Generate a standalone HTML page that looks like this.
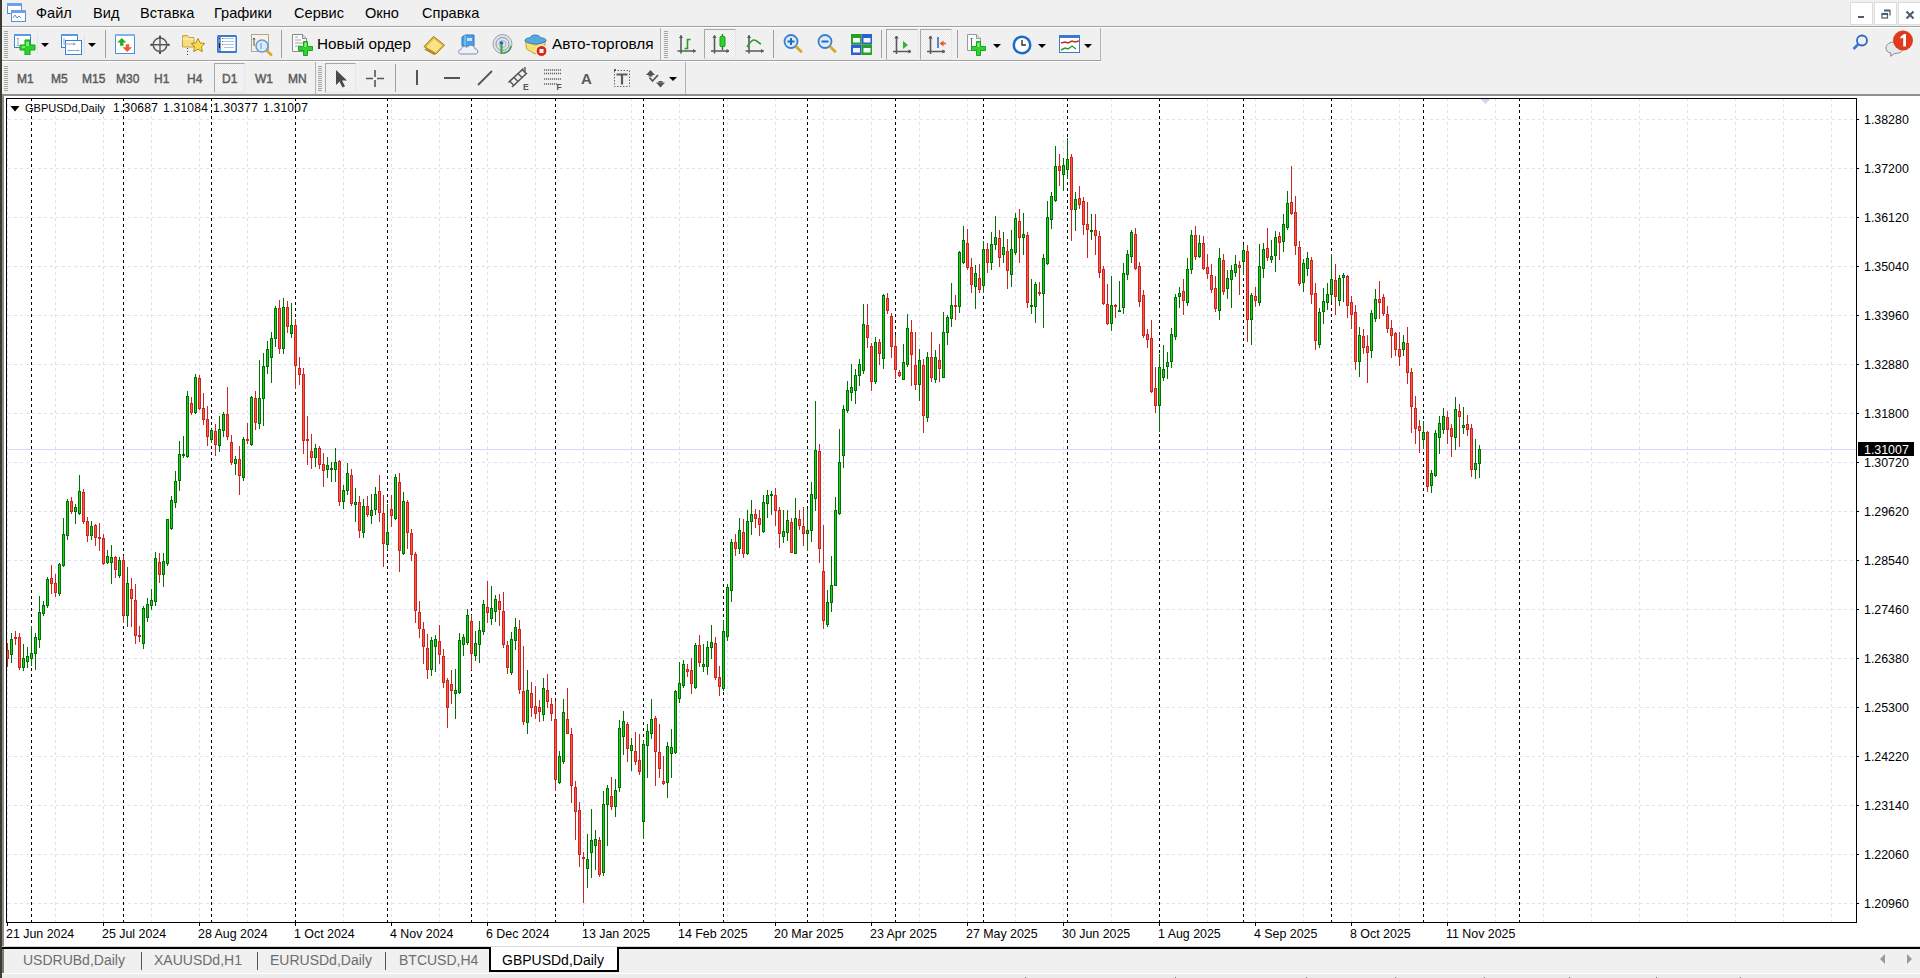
<!DOCTYPE html>
<html><head><meta charset="utf-8"><title>MetaTrader 5</title>
<style>
html,body{margin:0;padding:0;}
body{width:1920px;height:978px;overflow:hidden;position:relative;background:#f0f0f0;font-family:"Liberation Sans",sans-serif;color:#000;}
.a{position:absolute;}
.t{position:absolute;white-space:nowrap;line-height:1;}
.chart{position:absolute;left:0;top:0;}
.menu{font-size:14.6px;top:6px;}
.tf{font-size:12px;color:#5c5c5c;-webkit-text-stroke:0.45px #5c5c5c;top:73px;}
.px{font-size:12.4px;left:1864px;}
.hd{font-size:12px;top:102px;letter-spacing:0.25px;}
.dt{font-size:12.4px;top:928px;}
.tab{font-size:14px;top:953px;color:#6d6d6d;}
.grip{position:absolute;width:4px;background:repeating-linear-gradient(#a4a4a4 0 1px,transparent 1px 2px);}
.sep{position:absolute;width:1px;background:#a0a0a0;}
.pressed{position:absolute;border:1px solid;border-color:#a8a8a8 #e8e8e8 #e8e8e8 #a8a8a8;background-color:#f4f4f4;background-image:conic-gradient(#f7f7f7 25%,#ebebeb 0 50%,#f7f7f7 0 75%,#ebebeb 0);background-size:2px 2px;box-sizing:border-box;}
.dd{position:absolute;width:0;height:0;border-left:4px solid transparent;border-right:4px solid transparent;border-top:4px solid #000;}
</style></head><body>
<!-- left desktop strip & mdi border -->
<div class="a" style="left:0;top:0;width:2px;height:978px;background:#3c3c30"></div>
<!-- menu bar -->
<div class="a" style="left:2px;top:0;width:1918px;height:26px;background:#f0f0f0"></div>
<div class="a" style="left:2px;top:26px;width:1918px;height:1px;background:#a0a0a0"></div>
<div class="a" style="left:2px;top:27px;width:1918px;height:1px;background:#ffffff"></div>
<svg class="a" style="left:6px;top:2px" width="22" height="22" viewBox="0 0 22 22">
<rect x="1.5" y="1.5" width="14" height="10" fill="#fff" stroke="#5b8fd8"/><rect x="1" y="1" width="15" height="3" fill="#6fa0e8"/>
<rect x="5.5" y="8.5" width="14" height="11" fill="#fff" stroke="#5b8fd8"/><rect x="5" y="8" width="15" height="3" fill="#6fa0e8"/>
<path d="M7 16l2-3 2 3 2-2 2 2" stroke="#5b8fd8" fill="none"/>
</svg>
<span class="t menu" style="left:36px">Файл</span>
<span class="t menu" style="left:93px">Вид</span>
<span class="t menu" style="left:140px">Вставка</span>
<span class="t menu" style="left:214px">Графики</span>
<span class="t menu" style="left:294px">Сервис</span>
<span class="t menu" style="left:365px">Окно</span>
<span class="t menu" style="left:422px">Справка</span>
<!-- window buttons -->
<div class="a" style="left:1850px;top:2px;width:23px;height:23px;background:#fff;border:1px solid #dcdcdc;box-sizing:border-box"></div>
<div class="a" style="left:1874px;top:2px;width:23px;height:23px;background:#fff;border:1px solid #dcdcdc;box-sizing:border-box"></div>
<div class="a" style="left:1898px;top:2px;width:22px;height:23px;background:#fff;border:1px solid #dcdcdc;border-right:none;box-sizing:border-box"></div>
<div class="a" style="left:1858px;top:16px;width:6px;height:2px;background:#4a5a70"></div>
<svg class="a" style="left:1881px;top:9px" width="10" height="10"><rect x="1" y="4.5" width="5.5" height="4.5" fill="none" stroke="#4a5a70" stroke-width="1.2"/><path d="M1 5h5.5" stroke="#4a5a70" stroke-width="2"/><path d="M3 1.5h6v5" fill="none" stroke="#4a5a70" stroke-width="1.2"/><path d="M3 1.5h6" stroke="#4a5a70" stroke-width="2"/></svg>
<svg class="a" style="left:1905px;top:10px" width="10" height="10"><path d="M1.5 1.5l7 7M8.5 1.5l-7 7" stroke="#4a5a70" stroke-width="2"/></svg>

<!-- toolbar row 1 -->
<div class="a" style="left:2px;top:60px;width:1099px;height:1px;background:#a0a0a0"></div>
<div class="a" style="left:2px;top:61px;width:1099px;height:1px;background:#ffffff"></div>
<div class="a" style="left:1100px;top:28px;width:1px;height:32px;background:#b4b4b4"></div>
<div class="grip" style="left:4px;top:31px;height:27px"></div>
<div class="grip" style="left:664px;top:31px;height:27px"></div>
<div class="sep" style="left:105px;top:30px;height:28px"></div>
<div class="sep" style="left:281px;top:30px;height:28px"></div>
<div class="sep" style="left:660px;top:28px;height:32px;background:#b4b4b4"></div>
<div class="sep" style="left:773px;top:30px;height:28px"></div>
<div class="sep" style="left:881px;top:30px;height:28px"></div>
<div class="sep" style="left:957px;top:30px;height:28px"></div>
<!-- icons row1 -->
<!-- new chart -->
<svg class="a" style="left:13px;top:33px" width="24" height="22" viewBox="0 0 24 22">
<rect x="1.5" y="1.5" width="16" height="13" fill="#fff" stroke="#3d80cc"/><rect x="1" y="1" width="17" height="2" fill="#5a9ae0"/>
<path d="M5 5v8M4 6l1-1 1 1M4 12l1 1 1-1" stroke="#8aa8d0" fill="none"/>
<path d="M12 7h5v5h5v5h-5v5h-5v-5H7v-5h5z" fill="#2ad42a" stroke="#12a012"/>
<path d="M13 9h3v4h-3zM9 13h3v2H9z" fill="#7aee7a"/>
</svg>
<div class="a" style="left:37px;top:34px;width:1px;height:20px;background:#dde4ee"></div>
<div class="dd" style="left:41px;top:43px"></div>
<!-- profiles -->
<svg class="a" style="left:60px;top:33px" width="24" height="24" viewBox="0 0 24 24">
<rect x="1.5" y="1.5" width="16" height="13" fill="#fff" stroke="#3d80cc"/><rect x="1" y="1" width="17" height="2" fill="#5a9ae0"/>
<rect x="5.5" y="7.5" width="16" height="14" fill="#fff" stroke="#3d80cc"/>
<path d="M3.5 11h12M13 10l2 1-2 1M4 5v6" stroke="#8aa8d0" fill="none"/>
<path d="M8 17.5h11M9 16.5l-1 1 1 1M18 16.5l1 1-1 1" stroke="#8aa8d0" fill="none"/>
</svg>
<div class="a" style="left:84px;top:34px;width:1px;height:20px;background:#dde4ee"></div>
<div class="dd" style="left:88px;top:43px"></div>
<!-- market watch -->
<svg class="a" style="left:114px;top:33px" width="22" height="22" viewBox="0 0 22 22">
<rect x="1.5" y="1.5" width="19" height="19" fill="#fff" stroke="#4a90e0"/><rect x="1" y="1" width="20" height="2" fill="#7ab4f4"/>
<path d="M7.8 5L3.3 9.5h2.8v3.2h3.4V9.5h2.8z" fill="#22b022"/><path d="M13.2 19l4.8-4.8h-2.8v-3h-3.4v3H8.5z" fill="#f05a28"/>
</svg>
<!-- crosshair -->
<svg class="a" style="left:149px;top:35px" width="22" height="20" viewBox="0 0 22 20">
<circle cx="11" cy="9.75" r="6.8" fill="none" stroke="#5a5a5a" stroke-width="1.5"/><path d="M11 0.5v18.5M1.5 9.75h19" stroke="#5a5a5a" stroke-width="1.4"/>
<path d="M10 1h2v2h-2zM10 17h2v2h-2zM1.5 8.75h2v2h-2zM18.5 8.75h2v2h-2z" fill="#4a4a4a"/>
</svg>
<!-- folder star -->
<svg class="a" style="left:181px;top:33px" width="26" height="23" viewBox="0 0 26 23">
<path d="M1.5 2.5h5l1.5 2h5v9.5h-11.5z" fill="#f4dc80" stroke="#c8a040"/><path d="M1.5 6h11.5" stroke="#fff4c0"/>
<path d="M6.5 15v1M6.5 18v1M6.5 21v1" stroke="#333"/>
<path d="M17 5.5l2.1 4.4 4.7.6-3.4 3.3.9 4.8-4.3-2.4-4.3 2.4.9-4.8-3.4-3.3 4.7-.6z" fill="#f8dc48" stroke="#b08818"/>
</svg>
<!-- window list -->
<svg class="a" style="left:216px;top:34px" width="22" height="20" viewBox="0 0 22 20">
<rect x="1" y="1" width="20" height="18" rx="1.5" fill="#3a7ad0"/><rect x="5" y="3" width="14.5" height="14" fill="#fff"/><rect x="2.5" y="3" width="2.5" height="14" fill="#6a9ad8"/>
<path d="M8 4.5h10M8 7.5h10M8 10.5h10M8 13.5h10" stroke="#aac4ec"/><path d="M6 4.5h1.5M6 10.5h1.5" stroke="#f04060"/><path d="M6 7.5h1.5" stroke="#30a050"/><path d="M3 4h1v1H3zM3 9h1v5H3z" fill="#222"/>
</svg>
<!-- tester -->
<svg class="a" style="left:250px;top:33px" width="24" height="24" viewBox="0 0 24 24">
<rect x="1.5" y="1.5" width="17" height="17" fill="#f6f2ea" stroke="#b0a88e"/>
<path d="M4 13V5M4 5l-1 1.5M4 5l1 1.5" stroke="#555" fill="none"/>
<circle cx="12" cy="13" r="6" fill="#dceafa" stroke="#6a9ad4" stroke-width="1.6"/><path d="M11 10v6" stroke="#8ab0dc" stroke-width="1.5"/>
<path d="M16.5 17.5l5.5 5" stroke="#d8a828" stroke-width="2.6"/>
</svg>
<!-- new order -->
<svg class="a" style="left:290px;top:33px" width="26" height="25" viewBox="0 0 26 25">
<path d="M2.5 1.5h10l4 4v13h-14z" fill="#fafafa" stroke="#8a8a8a"/><path d="M12.5 1.5v4h4" fill="#ddd" stroke="#8a8a8a"/><path d="M5 4h3M5 7h6M5 10h8M5 13h6" stroke="#a8a8a8" stroke-width="1.2"/>
<path d="M13.5 8.5h4v5h5v4h-5v5h-4v-5h-5v-4h5z" fill="#30d030" stroke="#18a818"/><path d="M14.5 10h2v4h-2z" fill="#90f090"/>
</svg>
<span class="t" style="left:317px;top:36px;font-size:15.3px">Новый ордер</span>
<!-- book -->
<svg class="a" style="left:422px;top:34px" width="26" height="22" viewBox="0 0 26 22">
<path d="M2 12.5L11.5 2.5l11 8.5-8.5 9z" fill="#e8bc3c" stroke="#a87818"/><path d="M4.5 13L12 5l8 6.5-6.5 6.8z" fill="#f8e488"/><path d="M3 15l10 5.5" stroke="#b08020" stroke-width="1.5"/>
</svg>
<!-- vps cloud -->
<svg class="a" style="left:457px;top:33px" width="24" height="24" viewBox="0 0 24 24">
<path d="M5 4l3-2h9v11H5z" fill="#4aa0e8" stroke="#2a74c0"/><path d="M8 2v11" stroke="#9cd0f8"/><rect x="10" y="5" width="5" height="3" fill="#c8e4fa"/>
<path d="M3.5 21c-2.5 0-2.5-4.5.5-4.5.3-3 4-4 6-2 2-3.5 8-2.5 8 1.5 3.5-.5 4 5 .5 5z" fill="#eef2f8" stroke="#7a8ea8"/>
</svg>
<!-- signals -->
<svg class="a" style="left:491px;top:33px" width="23" height="23" viewBox="0 0 23 23">
<circle cx="11.5" cy="11" r="9.5" fill="#dde3e8" stroke="#98a4b0"/><circle cx="11.5" cy="11" r="6.5" fill="none" stroke="#8c98a4"/><circle cx="11.5" cy="11" r="3.5" fill="none" stroke="#a8b4c0"/><circle cx="10.5" cy="10" r="1.8" fill="#2a5ad0"/>
<path d="M10.5 11v10" stroke="#30a830" stroke-width="2"/><path d="M12 20a9 9 0 0 0 8-7" stroke="#4a9a5a" stroke-width="1.6" fill="none"/>
</svg>
<!-- auto trading -->
<svg class="a" style="left:524px;top:33px" width="25" height="25" viewBox="0 0 25 25">
<path d="M2.5 16l-1-8 10 4 10-4-1.5 9-9 4z" fill="#f8e070" stroke="#c8a030"/>
<path d="M1 8c0-3 3-3 5-3 1-4 9-4 11 0 2 0 5 0 5 3-2 2-7 3-10.5 3S3 10 1 8z" fill="#58a8e0" stroke="#3080c0"/>
<circle cx="17.5" cy="18" r="5.5" fill="#d82818" stroke="#fff" stroke-width="1"/><rect x="15.5" y="16" width="4" height="4" fill="#fff"/>
</svg>
<span class="t" style="left:552px;top:36px;font-size:15.4px">Авто-торговля</span>
<!-- chart types -->
<div class="pressed" style="left:704px;top:29px;width:32px;height:30px"></div>
<svg class="a" style="left:676px;top:33px" width="22" height="22" viewBox="0 0 22 22">
<path d="M5 2.5v18M1.5 18h18" stroke="#5a5a5a" stroke-width="1.6" fill="none"/><path d="M3.5 5l1.5-2.5L6.5 5M17 16.5l2.5 1.5-2.5 1.5" fill="#5a5a5a" stroke="#5a5a5a"/>
<path d="M8.5 15.5h3v-9h3" stroke="#2a9a2a" stroke-width="1.6" fill="none"/>
</svg>
<svg class="a" style="left:710px;top:33px" width="22" height="22" viewBox="0 0 22 22">
<path d="M4.5 2.5v18M1 18h18" stroke="#5a5a5a" stroke-width="1.6" fill="none"/><path d="M3 5l1.5-2.5L6 5M16.5 16.5l2.5 1.5-2.5 1.5" fill="#5a5a5a" stroke="#5a5a5a"/>
<path d="M12.5 1v16" stroke="#108a10" stroke-width="1.4"/><rect x="10" y="3.5" width="5" height="10" rx="1" fill="#30d030" stroke="#12a012"/>
</svg>
<svg class="a" style="left:744px;top:33px" width="22" height="22" viewBox="0 0 22 22">
<path d="M5 2.5v18M1.5 18h18" stroke="#5a5a5a" stroke-width="1.6" fill="none"/><path d="M3.5 5l1.5-2.5L6.5 5M17 16.5l2.5 1.5-2.5 1.5" fill="#5a5a5a" stroke="#5a5a5a"/>
<path d="M3 14c2-3 4-7 7-7s4 3 7 4" stroke="#2a9a2a" stroke-width="1.6" fill="none"/>
</svg>
<!-- zoom in/out, tile -->
<svg class="a" style="left:782px;top:33px" width="22" height="22" viewBox="0 0 22 22">
<circle cx="9" cy="8.5" r="6.5" fill="#dcecfc" stroke="#3a80d0" stroke-width="1.8"/><path d="M5.5 8.5h7M9 5v7" stroke="#2a68c0" stroke-width="2"/><path d="M13.8 13.3l6 6" stroke="#d8a828" stroke-width="2.8"/>
</svg>
<svg class="a" style="left:816px;top:33px" width="22" height="22" viewBox="0 0 22 22">
<circle cx="9" cy="8.5" r="6.5" fill="#dcecfc" stroke="#3a80d0" stroke-width="1.8"/><path d="M5.5 8.5h7" stroke="#2a68c0" stroke-width="2"/><path d="M13.8 13.3l6 6" stroke="#d8a828" stroke-width="2.8"/>
</svg>
<svg class="a" style="left:851px;top:34px" width="21" height="21" viewBox="0 0 21 21">
<rect x="0" y="0" width="10.5" height="10.5" fill="#28a028"/><rect x="10.5" y="0" width="10.5" height="10.5" fill="#2860d0"/><rect x="0" y="10.5" width="10.5" height="10.5" fill="#2860d0"/><rect x="10.5" y="10.5" width="10.5" height="10.5" fill="#28a028"/>
<rect x="2" y="4" width="7" height="4.5" fill="#f0fff0"/><rect x="12.5" y="4" width="7" height="4.5" fill="#f0f4ff"/><rect x="2" y="14" width="7" height="4.5" fill="#f0f4ff"/><rect x="12.5" y="14" width="7" height="4.5" fill="#f0fff0"/>
</svg>
<!-- autoscroll, shift -->
<div class="pressed" style="left:886px;top:29px;width:32px;height:31px"></div>
<div class="pressed" style="left:920px;top:29px;width:32px;height:31px"></div>
<svg class="a" style="left:888px;top:33px" width="26" height="24" viewBox="0 0 26 24">
<path d="M8.5 3v18M5 18.5h18" stroke="#5a5a5a" stroke-width="1.6" fill="none"/><path d="M7 5.5l1.5-2.5L10 5.5M20.5 17l2.5 1.5-2.5 1.5" fill="#5a5a5a" stroke="#5a5a5a"/>
<path d="M15 8v8l5-4z" fill="#2ab82a"/>
</svg>
<svg class="a" style="left:922px;top:33px" width="26" height="24" viewBox="0 0 26 24">
<path d="M8.5 3v18M5 18.5h18" stroke="#5a5a5a" stroke-width="1.6" fill="none"/><path d="M7 5.5l1.5-2.5L10 5.5M20.5 17l2.5 1.5-2.5 1.5" fill="#5a5a5a" stroke="#5a5a5a"/>
<path d="M16 4v11" stroke="#2a70c0" stroke-width="1.6"/><path d="M17.5 10.5l4-3v6z" fill="#e85a20"/><path d="M19 10.5h5" stroke="#e85a20" stroke-width="1.6"/>
</svg>
<!-- indicators, periods, templates -->
<svg class="a" style="left:966px;top:33px" width="24" height="25" viewBox="0 0 24 25">
<path d="M1.5 1.5h9l4 4v12h-13z" fill="#fafafa" stroke="#9a9a9a"/><path d="M10.5 1.5v4h4" fill="#e0e0e0" stroke="#9a9a9a"/><path d="M5.5 5v10M4.5 6l1-1 1 1" stroke="#666" fill="none"/>
<path d="M10.5 8.5h4v5h5v4h-5v5h-4v-5h-5v-4h5z" fill="#30d030" stroke="#18a818"/><path d="M11.5 10h2v4h-2z" fill="#90f090"/>
</svg>
<div class="dd" style="left:993px;top:44px"></div>
<svg class="a" style="left:1011px;top:34px" width="22" height="22" viewBox="0 0 22 22">
<circle cx="11" cy="11" r="9.5" fill="#1a6ad0"/><circle cx="11" cy="11" r="7" fill="#fff"/><path d="M11 6v5h4" stroke="#333" stroke-width="1.4" fill="none"/>
</svg>
<div class="dd" style="left:1038px;top:44px"></div>
<svg class="a" style="left:1058px;top:34px" width="24" height="20" viewBox="0 0 24 20">
<rect x="1.5" y="1.5" width="20" height="17" fill="#fff" stroke="#3a7ad0"/><rect x="1" y="1" width="21" height="3" fill="#3a7ad0"/>
<path d="M3 9l4-1 3 1 4-2 3 1 4-1" stroke="#c03020" stroke-width="1.4" fill="none"/><path d="M3 16l4-2 3 1 4-3 4 3" stroke="#2a9a2a" stroke-width="1.4" fill="none"/>
</svg>
<div class="dd" style="left:1084px;top:44px"></div>
<!-- search & chat -->
<svg class="a" style="left:1851px;top:34px" width="20" height="18" viewBox="0 0 20 18">
<circle cx="11" cy="6.5" r="5" fill="none" stroke="#2a68c8" stroke-width="1.8"/><path d="M7.5 10l-5 5" stroke="#3a78d8" stroke-width="2.6"/>
</svg>
<svg class="a" style="left:1883px;top:29px" width="32" height="28" viewBox="0 0 32 28">
<path d="M3 19c0-4 4-6 8.5-6s8.5 2 8.5 6-4 5.5-8.5 5.5l-4 2.8 .6-3.2C4.5 23.5 3 21.5 3 19z" fill="#e6e8ea" stroke="#8a8a8a"/>
<circle cx="20" cy="11.5" r="10" fill="#e03a1e"/><path d="M17.5 7.8L21 5h2v12.5h-2.8V8.6l-2.7 1.3z" fill="#fff"/>
</svg>

<!-- toolbar row 2 -->
<div class="a" style="left:2px;top:94px;width:1918px;height:2px;background:#8e8e8e"></div>
<div class="grip" style="left:4px;top:66px;height:25px"></div>
<div class="grip" style="left:318px;top:66px;height:25px"></div>
<div class="sep" style="left:315px;top:62px;height:32px;background:#b4b4b4"></div>
<div class="sep" style="left:685px;top:62px;height:32px;background:#b4b4b4"></div>
<div class="sep" style="left:395px;top:64px;height:28px"></div>
<div class="pressed" style="left:214px;top:63px;width:31px;height:30px"></div>
<div class="pressed" style="left:325px;top:63px;width:31px;height:30px"></div>
<span class="t tf" style="left:17px">M1</span>
<span class="t tf" style="left:51px">M5</span>
<span class="t tf" style="left:82px">M15</span>
<span class="t tf" style="left:116px">M30</span>
<span class="t tf" style="left:154px">H1</span>
<span class="t tf" style="left:187px">H4</span>
<span class="t tf" style="left:222px">D1</span>
<span class="t tf" style="left:255px">W1</span>
<span class="t tf" style="left:288px">MN</span>
<svg class="a" style="left:331px;top:68px" width="20" height="22" viewBox="0 0 20 22">
<path d="M5 2v15l3.5-3.5 3 6 2.5-1.2-3-5.8H16z" fill="#4a4a4a"/>
</svg>
<svg class="a" style="left:365px;top:68px" width="20" height="22" viewBox="0 0 20 22">
<path d="M10 2v7M10 12v7M1 10.5h7M12 10.5h7" stroke="#555" stroke-width="1.6"/>
</svg>
<div class="a" style="left:416px;top:70px;width:2px;height:15px;background:#555"></div>
<div class="a" style="left:444px;top:77px;width:16px;height:2px;background:#555"></div>
<svg class="a" style="left:476px;top:69px" width="18" height="18" viewBox="0 0 18 18"><path d="M2 16L16 2" stroke="#555" stroke-width="1.8"/></svg>
<svg class="a" style="left:507px;top:66px" width="24" height="25" viewBox="0 0 24 25">
<path d="M1.5 16.5L16.5 2.5M5 21L20 7" stroke="#555" stroke-width="1.6"/>
<path d="M3 15.5l4 4M7 11.5l4 4M11 7.5l4 4M15 3.5l4 4" stroke="#555" stroke-width="1.4"/><path d="M18 1v5" stroke="#555" stroke-width="1.4"/>
<text x="16" y="23.5" font-size="8.5" font-weight="bold" fill="#555" font-family="Liberation Sans">E</text>
</svg>
<svg class="a" style="left:542px;top:66px" width="24" height="25" viewBox="0 0 24 25">
<path d="M2 4h17M2 7.5h17M2 13h17M2 18h14" stroke="#666" stroke-width="1.4" stroke-dasharray="1.2 0.8"/>
<text x="14.5" y="23.5" font-size="8.5" font-weight="bold" fill="#555" font-family="Liberation Sans">F</text>
</svg>
<span class="t" style="left:581px;top:71px;font-size:15px;font-weight:bold;color:#5a5a5a">A</span>
<svg class="a" style="left:612px;top:68px" width="20" height="21" viewBox="0 0 20 21">
<rect x="2.5" y="2.5" width="15" height="16" fill="none" stroke="#666" stroke-dasharray="1.5 1.5"/><path d="M4.5 6.5h11M10 6.5v10" stroke="#5a5a5a" stroke-width="2.2"/><path d="M2 1h2v2H2z" fill="#555"/>
</svg>
<svg class="a" style="left:645px;top:68px" width="22" height="22" viewBox="0 0 22 22">
<path d="M5.5 2L10 7H1z" fill="#555"/><path d="M4.5 9.5l3 3.5 5.5-6" stroke="#555" stroke-width="1.8" fill="none"/><path d="M15.5 19.5L20 14.5h-9z" fill="#555"/><path d="M3.5 7h4v1.5h-4zM13.5 13h4v1.5h-4z" fill="#555"/>
</svg>
<div class="dd" style="left:669px;top:77px"></div>

<!-- chart window -->
<div class="a" style="left:2px;top:95px;width:2px;height:879px;background:#8c8c8c"></div>
<div class="a" style="left:4px;top:96px;width:1916px;height:850px;background:#fff"></div>
<svg class="chart" width="1920" height="978" viewBox="0 0 1920 978" shape-rendering="crispEdges"><path d="M8 119.5H1856M8 168.5H1856M8 217.5H1856M8 266.5H1856M8 315.5H1856M8 364.5H1856M8 413.5H1856M8 462.5H1856M8 511.5H1856M8 560.5H1856M8 609.5H1856M8 658.5H1856M8 707.5H1856M8 756.5H1856M8 805.5H1856M8 854.5H1856M8 903.5H1856" stroke="#e0e0ee" stroke-width="1" stroke-dasharray="3 3" fill="none"/><path d="M7.5 98V922M55.5 98V922M103.5 98V922M151.5 98V922M199.5 98V922M247.5 98V922M295.5 98V922M343.5 98V922M391.5 98V922M439.5 98V922M487.5 98V922M535.5 98V922M583.5 98V922M631.5 98V922M679.5 98V922M727.5 98V922M775.5 98V922M823.5 98V922M871.5 98V922M919.5 98V922M967.5 98V922M1015.5 98V922M1063.5 98V922M1111.5 98V922M1159.5 98V922M1207.5 98V922M1255.5 98V922M1303.5 98V922M1351.5 98V922M1399.5 98V922M1447.5 98V922M1495.5 98V922M1543.5 98V922M1591.5 98V922M1639.5 98V922M1687.5 98V922M1735.5 98V922M1783.5 98V922M1831.5 98V922" stroke="#e0e0ee" stroke-width="1" stroke-dasharray="3 3" fill="none"/><rect x="7" y="449" width="1849" height="1" fill="#d6d6f6"/><path d="M31.5 98V922M123.5 98V922M211.5 98V922M295.5 98V922M387.5 98V922M471.5 98V922M555.5 98V922M643.5 98V922M723.5 98V922M807.5 98V922M895.5 98V922M983.5 98V922M1067.5 98V922M1159.5 98V922M1243.5 98V922M1331.5 98V922M1423.5 98V922M1519.5 98V922" stroke="#000" stroke-width="1" stroke-dasharray="3 3" fill="none"/><path d="M1480 99H1490L1485 104Z" fill="#d4d4f4"/><path d="M11.5 633V663M23.5 644V671M27.5 647V668M31.5 626V666M35.5 633V670M39.5 596V648M43.5 601V616M47.5 577V608M59.5 563V596M63.5 518V567M67.5 499V540M75.5 504V524M79.5 475V515M91.5 521V540M107.5 550V564M111.5 545V584M119.5 557V578M127.5 567V627M143.5 606V649M147.5 598V622M151.5 589V610M155.5 552V606M163.5 553V587M167.5 519V566M171.5 496V530M175.5 471V508M179.5 441V491M183.5 436V458M187.5 391V458M195.5 374V414M211.5 429V443M219.5 416V452M223.5 412V437M235.5 456V475M243.5 437V481M251.5 396V446M259.5 360V429M263.5 353V426M267.5 341V374M271.5 332V383M275.5 306V347M283.5 298V354M291.5 303V338M315.5 444V467M327.5 457V478M331.5 462V482M335.5 448V482M343.5 485V509M347.5 463V495M355.5 488V522M363.5 499V538M371.5 494V524M375.5 487V515M387.5 504V550M395.5 474V520M403.5 492V555M431.5 637V676M435.5 635V672M455.5 669V719M459.5 633V694M463.5 634V656M467.5 609V645M475.5 631V661M479.5 621V663M483.5 600V635M491.5 586V625M495.5 595V622M511.5 632V675M515.5 618V650M527.5 670V734M543.5 678V721M559.5 751V784M563.5 699V764M587.5 834V888M591.5 809V878M595.5 830V870M603.5 791V876M607.5 785V846M615.5 779V817M619.5 720V792M623.5 711V755M631.5 738V771M643.5 740V839M647.5 724V778M651.5 699V739M667.5 742V798M671.5 729V778M675.5 690V754M679.5 662V703M683.5 660V688M695.5 643V689M703.5 644V672M707.5 641V675M711.5 625V659M723.5 620V691M727.5 584V641M731.5 539V602M739.5 518V554M747.5 510V555M751.5 500V535M763.5 495V533M767.5 490V518M771.5 491V515M783.5 510V543M787.5 510V541M795.5 498V554M807.5 509V551M811.5 482V542M815.5 401V511M827.5 590V627M831.5 556V612M835.5 497V586M839.5 429V515M843.5 405V468M847.5 381V413M851.5 364V401M855.5 369V404M859.5 359V386M863.5 304V374M875.5 337V384M883.5 294V369M903.5 344V380M907.5 314V367M919.5 349V401M927.5 352V422M935.5 350V383M943.5 312V378M947.5 315V345M951.5 283V327M959.5 251V313M963.5 226V264M975.5 265V309M983.5 241V293M991.5 232V270M995.5 216V250M1003.5 232V263M1011.5 230V287M1015.5 213V255M1023.5 213V255M1031.5 279V314M1035.5 282V323M1043.5 254V328M1047.5 201V265M1051.5 192V229M1055.5 146V202M1063.5 158V191M1067.5 138V179M1075.5 192V231M1091.5 214V240M1111.5 276V331M1119.5 281V312M1123.5 263V314M1127.5 250V280M1131.5 230V263M1159.5 354V432M1163.5 345V381M1167.5 352V379M1171.5 328V368M1175.5 294V340M1179.5 287V308M1187.5 258V306M1191.5 230V274M1199.5 235V258M1219.5 248V320M1227.5 270V299M1231.5 265V308M1235.5 255V277M1243.5 245V275M1251.5 293V345M1259.5 244V306M1263.5 243V278M1271.5 240V263M1275.5 231V272M1283.5 214V252M1287.5 191V230M1303.5 259V292M1307.5 252V276M1319.5 308V348M1323.5 288V324M1327.5 283V310M1331.5 254V302M1339.5 275V306M1343.5 273V302M1359.5 327V377M1371.5 310V358M1375.5 289V322M1403.5 335V356M1423.5 421V449M1431.5 470V493M1435.5 430V477M1439.5 416V454M1443.5 408V434M1455.5 397V450M1463.5 407V434M1475.5 439V479M1479.5 445V478" stroke="#007000" stroke-width="1" fill="none"/><path d="M7.5 643V667M15.5 631V645M19.5 633V670M51.5 565V594M55.5 574V597M71.5 497V514M83.5 489V524M87.5 517V542M95.5 524V546M99.5 523V551M103.5 534V565M115.5 556V578M123.5 556V623M131.5 578V627M135.5 584V644M139.5 626V642M159.5 553V583M191.5 397V415M199.5 375V410M203.5 393V425M207.5 406V446M215.5 424V456M227.5 387V440M231.5 435V465M239.5 446V495M247.5 423V444M255.5 391V430M279.5 300V354M287.5 301V333M295.5 319V389M299.5 357V385M303.5 368V454M307.5 416V465M311.5 434V469M319.5 446V469M323.5 453V487M339.5 460V506M351.5 469V506M359.5 496V538M367.5 496V517M379.5 475V522M383.5 495V567M391.5 495V527M399.5 473V572M407.5 500V549M411.5 529V561M415.5 552V623M419.5 601V638M423.5 622V664M427.5 634V679M439.5 625V664M443.5 649V688M447.5 678V728M451.5 670V704M471.5 615V670M487.5 581V623M499.5 594V626M503.5 592V648M507.5 641V674M519.5 620V694M523.5 646V725M531.5 682V717M535.5 686V719M539.5 700V722M547.5 674V708M551.5 698V721M555.5 701V791M567.5 688V734M571.5 728V803M575.5 781V840M579.5 802V867M583.5 852V903M599.5 837V877M611.5 777V810M627.5 722V762M635.5 732V765M639.5 734V775M655.5 716V786M659.5 724V778M663.5 756V785M687.5 664V677M691.5 658V694M699.5 635V667M715.5 637V680M719.5 666V696M735.5 534V556M743.5 519V558M755.5 509V528M759.5 510V536M775.5 488V526M779.5 507V548M791.5 518V553M799.5 510V530M803.5 507V546M819.5 444V563M823.5 525V629M867.5 304V348M871.5 343V391M879.5 339V365M887.5 293V314M891.5 313V358M895.5 335V379M899.5 370V377M911.5 320V386M915.5 332V390M923.5 359V433M931.5 332V382M939.5 344V382M955.5 295V320M967.5 229V270M971.5 258V293M979.5 264V293M987.5 243V273M999.5 230V267M1007.5 239V289M1019.5 209V263M1027.5 232V308M1039.5 282V296M1059.5 154V186M1071.5 154V241M1079.5 186V209M1083.5 197V235M1087.5 202V258M1095.5 214V255M1099.5 231V278M1103.5 266V305M1107.5 284V325M1115.5 304V318M1135.5 228V270M1139.5 262V307M1143.5 290V338M1147.5 329V348M1151.5 320V393M1155.5 367V413M1183.5 279V315M1195.5 226V260M1203.5 236V270M1207.5 254V279M1211.5 264V293M1215.5 276V312M1223.5 254V295M1239.5 261V295M1247.5 245V342M1255.5 287V307M1267.5 228V261M1279.5 232V260M1291.5 166V215M1295.5 196V255M1299.5 241V286M1311.5 257V304M1315.5 283V350M1335.5 264V315M1347.5 275V318M1351.5 296V329M1355.5 305V370M1363.5 329V354M1367.5 335V383M1379.5 281V319M1383.5 294V316M1387.5 306V333M1391.5 320V358M1395.5 332V356M1399.5 332V366M1407.5 327V384M1411.5 368V433M1415.5 396V444M1419.5 420V453M1427.5 431V492M1447.5 411V444M1451.5 424V457M1459.5 404V447M1467.5 415V436M1471.5 424V477" stroke="#cc2424" stroke-width="1" fill="none"/><path d="M10 639h3v16h-3ZM22 658h3v10h-3ZM26 656h3v6h-3ZM30 653h3v6h-3ZM34 637h3v17h-3ZM38 612h3v28h-3ZM42 605h3v9h-3ZM46 579h3v27h-3ZM58 564h3v30h-3ZM62 534h3v32h-3ZM66 501h3v35h-3ZM74 507h3v5h-3ZM78 491h3v23h-3ZM90 526h3v10h-3ZM106 556h3v7h-3ZM110 557h3v6h-3ZM118 560h3v16h-3ZM126 583h3v33h-3ZM142 608h3v36h-3ZM146 604h3v14h-3ZM150 600h3v6h-3ZM154 558h3v44h-3ZM162 561h3v14h-3ZM166 519h3v45h-3ZM170 500h3v29h-3ZM174 481h3v22h-3ZM178 454h3v27h-3ZM182 454h3v2h-3ZM186 396h3v61h-3ZM194 377h3v36h-3ZM210 430h3v10h-3ZM218 429h3v17h-3ZM222 414h3v17h-3ZM234 459h3v5h-3ZM242 439h3v39h-3ZM250 397h3v48h-3ZM258 398h3v26h-3ZM262 366h3v33h-3ZM266 349h3v18h-3ZM270 338h3v20h-3ZM274 308h3v31h-3ZM282 307h3v42h-3ZM290 325h3v9h-3ZM314 448h3v10h-3ZM326 465h3v5h-3ZM330 468h3v2h-3ZM334 462h3v8h-3ZM342 490h3v12h-3ZM346 473h3v18h-3ZM354 502h3v3h-3ZM362 506h3v27h-3ZM370 510h3v6h-3ZM374 494h3v16h-3ZM386 532h3v13h-3ZM394 477h3v42h-3ZM402 501h3v53h-3ZM430 640h3v30h-3ZM434 639h3v8h-3ZM454 690h3v4h-3ZM458 640h3v53h-3ZM462 637h3v8h-3ZM466 615h3v28h-3ZM474 643h3v13h-3ZM478 630h3v15h-3ZM482 604h3v28h-3ZM490 608h3v11h-3ZM494 599h3v13h-3ZM510 639h3v34h-3ZM514 627h3v14h-3ZM526 690h3v33h-3ZM542 688h3v27h-3ZM558 756h3v27h-3ZM562 712h3v50h-3ZM586 859h3v10h-3ZM590 840h3v13h-3ZM594 839h3v7h-3ZM602 804h3v69h-3ZM606 788h3v17h-3ZM614 790h3v17h-3ZM618 728h3v60h-3ZM622 721h3v16h-3ZM630 745h3v6h-3ZM642 744h3v78h-3ZM646 731h3v15h-3ZM650 719h3v15h-3ZM666 746h3v37h-3ZM670 747h3v7h-3ZM674 691h3v62h-3ZM678 683h3v16h-3ZM682 664h3v22h-3ZM694 645h3v43h-3ZM702 664h3v3h-3ZM706 647h3v20h-3ZM710 642h3v6h-3ZM722 631h3v58h-3ZM726 587h3v50h-3ZM730 542h3v49h-3ZM738 530h3v19h-3ZM746 521h3v33h-3ZM750 514h3v8h-3ZM762 502h3v30h-3ZM766 495h3v9h-3ZM770 494h3v2h-3ZM782 531h3v6h-3ZM786 520h3v13h-3ZM794 518h3v36h-3ZM806 530h3v4h-3ZM810 494h3v37h-3ZM814 450h3v49h-3ZM826 602h3v23h-3ZM830 585h3v18h-3ZM834 510h3v76h-3ZM838 462h3v52h-3ZM842 409h3v47h-3ZM846 390h3v21h-3ZM850 387h3v6h-3ZM854 375h3v16h-3ZM858 364h3v12h-3ZM862 324h3v47h-3ZM874 342h3v40h-3ZM882 295h3v64h-3ZM902 362h3v18h-3ZM906 328h3v37h-3ZM918 360h3v25h-3ZM926 357h3v61h-3ZM934 357h3v23h-3ZM942 332h3v46h-3ZM946 317h3v16h-3ZM950 305h3v14h-3ZM958 252h3v55h-3ZM962 240h3v23h-3ZM974 273h3v14h-3ZM982 249h3v37h-3ZM990 244h3v19h-3ZM994 237h3v8h-3ZM1002 247h3v8h-3ZM1010 249h3v26h-3ZM1014 218h3v35h-3ZM1022 234h3v4h-3ZM1030 305h3v2h-3ZM1034 284h3v23h-3ZM1042 258h3v36h-3ZM1046 217h3v47h-3ZM1050 196h3v24h-3ZM1054 166h3v35h-3ZM1062 165h3v10h-3ZM1066 159h3v11h-3ZM1074 199h3v11h-3ZM1090 230h3v2h-3ZM1110 305h3v19h-3ZM1118 310h3v2h-3ZM1122 273h3v35h-3ZM1126 254h3v21h-3ZM1130 232h3v25h-3ZM1158 367h3v39h-3ZM1162 369h3v9h-3ZM1166 362h3v5h-3ZM1170 334h3v28h-3ZM1174 297h3v40h-3ZM1178 293h3v4h-3ZM1186 269h3v34h-3ZM1190 235h3v35h-3ZM1198 243h3v14h-3ZM1218 258h3v53h-3ZM1226 278h3v11h-3ZM1230 270h3v10h-3ZM1234 264h3v9h-3ZM1242 250h3v12h-3ZM1250 295h3v25h-3ZM1258 266h3v37h-3ZM1262 249h3v20h-3ZM1270 256h3v4h-3ZM1274 237h3v19h-3ZM1282 224h3v18h-3ZM1286 203h3v25h-3ZM1302 263h3v20h-3ZM1306 258h3v11h-3ZM1318 312h3v33h-3ZM1322 301h3v11h-3ZM1326 294h3v9h-3ZM1330 279h3v16h-3ZM1338 278h3v23h-3ZM1342 275h3v3h-3ZM1358 335h3v27h-3ZM1370 313h3v38h-3ZM1374 299h3v20h-3ZM1402 342h3v8h-3ZM1422 432h3v8h-3ZM1430 473h3v13h-3ZM1434 433h3v43h-3ZM1438 423h3v15h-3ZM1442 416h3v14h-3ZM1454 409h3v29h-3ZM1462 425h3v3h-3ZM1474 463h3v7h-3ZM1478 449h3v15h-3Z" fill="#007000"/><path d="M6 650h3v9h-3ZM14 637h3v2h-3ZM18 637h3v31h-3ZM50 578h3v6h-3ZM54 583h3v10h-3ZM70 501h3v11h-3ZM82 492h3v30h-3ZM86 521h3v15h-3ZM94 525h3v13h-3ZM98 537h3v2h-3ZM102 538h3v26h-3ZM114 557h3v13h-3ZM122 560h3v56h-3ZM130 589h3v10h-3ZM134 600h3v36h-3ZM138 635h3v2h-3ZM158 562h3v13h-3ZM190 403h3v10h-3ZM198 378h3v31h-3ZM202 408h3v12h-3ZM206 419h3v18h-3ZM214 431h3v14h-3ZM226 414h3v23h-3ZM230 442h3v21h-3ZM238 459h3v17h-3ZM246 439h3v2h-3ZM254 398h3v25h-3ZM278 308h3v41h-3ZM286 307h3v20h-3ZM294 325h3v41h-3ZM298 368h3v7h-3ZM302 374h3v67h-3ZM306 439h3v2h-3ZM310 451h3v7h-3ZM318 448h3v17h-3ZM322 464h3v7h-3ZM338 461h3v41h-3ZM350 475h3v29h-3ZM358 502h3v29h-3ZM366 506h3v9h-3ZM378 491h3v22h-3ZM382 513h3v31h-3ZM390 509h3v7h-3ZM398 482h3v69h-3ZM406 502h3v31h-3ZM410 533h3v22h-3ZM414 554h3v57h-3ZM418 612h3v17h-3ZM422 629h3v18h-3ZM426 648h3v22h-3ZM438 641h3v14h-3ZM442 656h3v27h-3ZM446 680h3v28h-3ZM450 684h3v7h-3ZM470 621h3v33h-3ZM486 607h3v6h-3ZM498 601h3v9h-3ZM502 611h3v34h-3ZM506 645h3v23h-3ZM518 629h3v61h-3ZM522 691h3v31h-3ZM530 693h3v15h-3ZM534 706h3v8h-3ZM538 707h3v5h-3ZM546 690h3v12h-3ZM550 704h3v10h-3ZM554 719h3v61h-3ZM566 719h3v15h-3ZM570 734h3v52h-3ZM574 787h3v25h-3ZM578 810h3v45h-3ZM582 857h3v2h-3ZM598 840h3v35h-3ZM610 796h3v11h-3ZM626 724h3v25h-3ZM634 751h3v11h-3ZM638 760h3v12h-3ZM654 718h3v34h-3ZM658 752h3v17h-3ZM662 781h3v3h-3ZM686 669h3v3h-3ZM690 670h3v14h-3ZM698 645h3v18h-3ZM714 643h3v35h-3ZM718 677h3v10h-3ZM734 542h3v7h-3ZM742 532h3v22h-3ZM754 514h3v5h-3ZM758 518h3v7h-3ZM774 495h3v16h-3ZM778 510h3v24h-3ZM790 522h3v31h-3ZM798 519h3v7h-3ZM802 526h3v8h-3ZM818 451h3v98h-3ZM822 571h3v50h-3ZM866 325h3v13h-3ZM870 346h3v36h-3ZM878 342h3v12h-3ZM886 298h3v13h-3ZM890 316h3v31h-3ZM894 346h3v24h-3ZM898 372h3v4h-3ZM910 332h3v23h-3ZM914 365h3v20h-3ZM922 365h3v51h-3ZM930 357h3v21h-3ZM938 360h3v9h-3ZM954 305h3v2h-3ZM966 243h3v25h-3ZM970 267h3v18h-3ZM978 278h3v12h-3ZM986 249h3v14h-3ZM998 238h3v20h-3ZM1006 251h3v20h-3ZM1018 221h3v17h-3ZM1026 235h3v68h-3ZM1038 292h3v2h-3ZM1058 166h3v5h-3ZM1070 157h3v53h-3ZM1078 198h3v7h-3ZM1082 201h3v24h-3ZM1086 224h3v6h-3ZM1094 230h3v6h-3ZM1098 236h3v37h-3ZM1102 269h3v35h-3ZM1106 304h3v20h-3ZM1114 305h3v2h-3ZM1134 234h3v35h-3ZM1138 266h3v36h-3ZM1142 295h3v41h-3ZM1146 334h3v6h-3ZM1150 338h3v54h-3ZM1154 388h3v18h-3ZM1182 291h3v10h-3ZM1194 235h3v22h-3ZM1202 243h3v26h-3ZM1206 267h3v7h-3ZM1210 275h3v15h-3ZM1214 288h3v21h-3ZM1222 260h3v32h-3ZM1238 265h3v3h-3ZM1246 251h3v69h-3ZM1254 296h3v5h-3ZM1266 248h3v10h-3ZM1278 236h3v7h-3ZM1290 202h3v12h-3ZM1294 212h3v34h-3ZM1298 247h3v37h-3ZM1310 260h3v35h-3ZM1314 293h3v48h-3ZM1334 280h3v17h-3ZM1346 276h3v30h-3ZM1350 302h3v13h-3ZM1354 312h3v50h-3ZM1362 336h3v12h-3ZM1366 346h3v7h-3ZM1378 299h3v4h-3ZM1382 297h3v17h-3ZM1386 314h3v15h-3ZM1390 328h3v8h-3ZM1394 333h3v17h-3ZM1398 349h3v8h-3ZM1406 343h3v30h-3ZM1410 372h3v35h-3ZM1414 408h3v21h-3ZM1418 426h3v5h-3ZM1426 432h3v55h-3ZM1446 417h3v13h-3ZM1450 428h3v9h-3ZM1458 411h3v6h-3ZM1466 424h3v6h-3ZM1470 428h3v42h-3Z" fill="#cc2424"/><path d="M11 640h1v14h-1ZM23 659h1v8h-1ZM27 657h1v4h-1ZM31 654h1v4h-1ZM35 638h1v15h-1ZM39 613h1v26h-1ZM43 606h1v7h-1ZM47 580h1v25h-1ZM59 565h1v28h-1ZM63 535h1v30h-1ZM67 502h1v33h-1ZM75 508h1v3h-1ZM79 492h1v21h-1ZM91 527h1v8h-1ZM107 557h1v5h-1ZM111 558h1v4h-1ZM119 561h1v14h-1ZM127 584h1v31h-1ZM143 609h1v34h-1ZM147 605h1v12h-1ZM151 601h1v4h-1ZM155 559h1v42h-1ZM163 562h1v12h-1ZM167 520h1v43h-1ZM171 501h1v27h-1ZM175 482h1v20h-1ZM179 455h1v25h-1ZM187 397h1v59h-1ZM195 378h1v34h-1ZM211 431h1v8h-1ZM219 430h1v15h-1ZM223 415h1v15h-1ZM235 460h1v3h-1ZM243 440h1v37h-1ZM251 398h1v46h-1ZM259 399h1v24h-1ZM263 367h1v31h-1ZM267 350h1v16h-1ZM271 339h1v18h-1ZM275 309h1v29h-1ZM283 308h1v40h-1ZM291 326h1v7h-1ZM315 449h1v8h-1ZM327 466h1v3h-1ZM335 463h1v6h-1ZM343 491h1v10h-1ZM347 474h1v16h-1ZM355 503h1v1h-1ZM363 507h1v25h-1ZM371 511h1v4h-1ZM375 495h1v14h-1ZM387 533h1v11h-1ZM395 478h1v40h-1ZM403 502h1v51h-1ZM431 641h1v28h-1ZM435 640h1v6h-1ZM455 691h1v2h-1ZM459 641h1v51h-1ZM463 638h1v6h-1ZM467 616h1v26h-1ZM475 644h1v11h-1ZM479 631h1v13h-1ZM483 605h1v26h-1ZM491 609h1v9h-1ZM495 600h1v11h-1ZM511 640h1v32h-1ZM515 628h1v12h-1ZM527 691h1v31h-1ZM543 689h1v25h-1ZM559 757h1v25h-1ZM563 713h1v48h-1ZM587 860h1v8h-1ZM591 841h1v11h-1ZM595 840h1v5h-1ZM603 805h1v67h-1ZM607 789h1v15h-1ZM615 791h1v15h-1ZM619 729h1v58h-1ZM623 722h1v14h-1ZM631 746h1v4h-1ZM643 745h1v76h-1ZM647 732h1v13h-1ZM651 720h1v13h-1ZM667 747h1v35h-1ZM671 748h1v5h-1ZM675 692h1v60h-1ZM679 684h1v14h-1ZM683 665h1v20h-1ZM695 646h1v41h-1ZM703 665h1v1h-1ZM707 648h1v18h-1ZM711 643h1v4h-1ZM723 632h1v56h-1ZM727 588h1v48h-1ZM731 543h1v47h-1ZM739 531h1v17h-1ZM747 522h1v31h-1ZM751 515h1v6h-1ZM763 503h1v28h-1ZM767 496h1v7h-1ZM783 532h1v4h-1ZM787 521h1v11h-1ZM795 519h1v34h-1ZM807 531h1v2h-1ZM811 495h1v35h-1ZM815 451h1v47h-1ZM827 603h1v21h-1ZM831 586h1v16h-1ZM835 511h1v74h-1ZM839 463h1v50h-1ZM843 410h1v45h-1ZM847 391h1v19h-1ZM851 388h1v4h-1ZM855 376h1v14h-1ZM859 365h1v10h-1ZM863 325h1v45h-1ZM875 343h1v38h-1ZM883 296h1v62h-1ZM903 363h1v16h-1ZM907 329h1v35h-1ZM919 361h1v23h-1ZM927 358h1v59h-1ZM935 358h1v21h-1ZM943 333h1v44h-1ZM947 318h1v14h-1ZM951 306h1v12h-1ZM959 253h1v53h-1ZM963 241h1v21h-1ZM975 274h1v12h-1ZM983 250h1v35h-1ZM991 245h1v17h-1ZM995 238h1v6h-1ZM1003 248h1v6h-1ZM1011 250h1v24h-1ZM1015 219h1v33h-1ZM1023 235h1v2h-1ZM1035 285h1v21h-1ZM1043 259h1v34h-1ZM1047 218h1v45h-1ZM1051 197h1v22h-1ZM1055 167h1v33h-1ZM1063 166h1v8h-1ZM1067 160h1v9h-1ZM1075 200h1v9h-1ZM1111 306h1v17h-1ZM1123 274h1v33h-1ZM1127 255h1v19h-1ZM1131 233h1v23h-1ZM1159 368h1v37h-1ZM1163 370h1v7h-1ZM1167 363h1v3h-1ZM1171 335h1v26h-1ZM1175 298h1v38h-1ZM1179 294h1v2h-1ZM1187 270h1v32h-1ZM1191 236h1v33h-1ZM1199 244h1v12h-1ZM1219 259h1v51h-1ZM1227 279h1v9h-1ZM1231 271h1v8h-1ZM1235 265h1v7h-1ZM1243 251h1v10h-1ZM1251 296h1v23h-1ZM1259 267h1v35h-1ZM1263 250h1v18h-1ZM1271 257h1v2h-1ZM1275 238h1v17h-1ZM1283 225h1v16h-1ZM1287 204h1v23h-1ZM1303 264h1v18h-1ZM1307 259h1v9h-1ZM1319 313h1v31h-1ZM1323 302h1v9h-1ZM1327 295h1v7h-1ZM1331 280h1v14h-1ZM1339 279h1v21h-1ZM1343 276h1v1h-1ZM1359 336h1v25h-1ZM1371 314h1v36h-1ZM1375 300h1v18h-1ZM1403 343h1v6h-1ZM1423 433h1v6h-1ZM1431 474h1v11h-1ZM1435 434h1v41h-1ZM1439 424h1v13h-1ZM1443 417h1v12h-1ZM1455 410h1v27h-1ZM1463 426h1v1h-1ZM1475 464h1v5h-1ZM1479 450h1v13h-1Z" fill="#22cc22"/><path d="M7 651h1v7h-1ZM19 638h1v29h-1ZM51 579h1v4h-1ZM55 584h1v8h-1ZM71 502h1v9h-1ZM83 493h1v28h-1ZM87 522h1v13h-1ZM95 526h1v11h-1ZM103 539h1v24h-1ZM115 558h1v11h-1ZM123 561h1v54h-1ZM131 590h1v8h-1ZM135 601h1v34h-1ZM159 563h1v11h-1ZM191 404h1v8h-1ZM199 379h1v29h-1ZM203 409h1v10h-1ZM207 420h1v16h-1ZM215 432h1v12h-1ZM227 415h1v21h-1ZM231 443h1v19h-1ZM239 460h1v15h-1ZM255 399h1v23h-1ZM279 309h1v39h-1ZM287 308h1v18h-1ZM295 326h1v39h-1ZM299 369h1v5h-1ZM303 375h1v65h-1ZM311 452h1v5h-1ZM319 449h1v15h-1ZM323 465h1v5h-1ZM339 462h1v39h-1ZM351 476h1v27h-1ZM359 503h1v27h-1ZM367 507h1v7h-1ZM379 492h1v20h-1ZM383 514h1v29h-1ZM391 510h1v5h-1ZM399 483h1v67h-1ZM407 503h1v29h-1ZM411 534h1v20h-1ZM415 555h1v55h-1ZM419 613h1v15h-1ZM423 630h1v16h-1ZM427 649h1v20h-1ZM439 642h1v12h-1ZM443 657h1v25h-1ZM447 681h1v26h-1ZM451 685h1v5h-1ZM471 622h1v31h-1ZM487 608h1v4h-1ZM499 602h1v7h-1ZM503 612h1v32h-1ZM507 646h1v21h-1ZM519 630h1v59h-1ZM523 692h1v29h-1ZM531 694h1v13h-1ZM535 707h1v6h-1ZM539 708h1v3h-1ZM547 691h1v10h-1ZM551 705h1v8h-1ZM555 720h1v59h-1ZM567 720h1v13h-1ZM571 735h1v50h-1ZM575 788h1v23h-1ZM579 811h1v43h-1ZM599 841h1v33h-1ZM611 797h1v9h-1ZM627 725h1v23h-1ZM635 752h1v9h-1ZM639 761h1v10h-1ZM655 719h1v32h-1ZM659 753h1v15h-1ZM663 782h1v1h-1ZM687 670h1v1h-1ZM691 671h1v12h-1ZM699 646h1v16h-1ZM715 644h1v33h-1ZM719 678h1v8h-1ZM735 543h1v5h-1ZM743 533h1v20h-1ZM755 515h1v3h-1ZM759 519h1v5h-1ZM775 496h1v14h-1ZM779 511h1v22h-1ZM791 523h1v29h-1ZM799 520h1v5h-1ZM803 527h1v6h-1ZM819 452h1v96h-1ZM823 572h1v48h-1ZM867 326h1v11h-1ZM871 347h1v34h-1ZM879 343h1v10h-1ZM887 299h1v11h-1ZM891 317h1v29h-1ZM895 347h1v22h-1ZM899 373h1v2h-1ZM911 333h1v21h-1ZM915 366h1v18h-1ZM923 366h1v49h-1ZM931 358h1v19h-1ZM939 361h1v7h-1ZM967 244h1v23h-1ZM971 268h1v16h-1ZM979 279h1v10h-1ZM987 250h1v12h-1ZM999 239h1v18h-1ZM1007 252h1v18h-1ZM1019 222h1v15h-1ZM1027 236h1v66h-1ZM1059 167h1v3h-1ZM1071 158h1v51h-1ZM1079 199h1v5h-1ZM1083 202h1v22h-1ZM1087 225h1v4h-1ZM1095 231h1v4h-1ZM1099 237h1v35h-1ZM1103 270h1v33h-1ZM1107 305h1v18h-1ZM1135 235h1v33h-1ZM1139 267h1v34h-1ZM1143 296h1v39h-1ZM1147 335h1v4h-1ZM1151 339h1v52h-1ZM1155 389h1v16h-1ZM1183 292h1v8h-1ZM1195 236h1v20h-1ZM1203 244h1v24h-1ZM1207 268h1v5h-1ZM1211 276h1v13h-1ZM1215 289h1v19h-1ZM1223 261h1v30h-1ZM1239 266h1v1h-1ZM1247 252h1v67h-1ZM1255 297h1v3h-1ZM1267 249h1v8h-1ZM1279 237h1v5h-1ZM1291 203h1v10h-1ZM1295 213h1v32h-1ZM1299 248h1v35h-1ZM1311 261h1v33h-1ZM1315 294h1v46h-1ZM1335 281h1v15h-1ZM1347 277h1v28h-1ZM1351 303h1v11h-1ZM1355 313h1v48h-1ZM1363 337h1v10h-1ZM1367 347h1v5h-1ZM1379 300h1v2h-1ZM1383 298h1v15h-1ZM1387 315h1v13h-1ZM1391 329h1v6h-1ZM1395 334h1v15h-1ZM1399 350h1v6h-1ZM1407 344h1v28h-1ZM1411 373h1v33h-1ZM1415 409h1v19h-1ZM1419 427h1v3h-1ZM1427 433h1v53h-1ZM1447 418h1v11h-1ZM1451 429h1v7h-1ZM1459 412h1v4h-1ZM1467 425h1v4h-1ZM1471 429h1v40h-1Z" fill="#ff5a3c"/><rect x="6.5" y="98.5" width="1850" height="824" fill="none" stroke="#000" stroke-width="1"/><path d="M1856 119.5h3M1856 168.5h3M1856 217.5h3M1856 266.5h3M1856 315.5h3M1856 364.5h3M1856 413.5h3M1856 462.5h3M1856 511.5h3M1856 560.5h3M1856 609.5h3M1856 658.5h3M1856 707.5h3M1856 756.5h3M1856 805.5h3M1856 854.5h3M1856 903.5h3" stroke="#000" stroke-width="1"/><path d="M7.5 922v4M103.5 922v4M199.5 922v4M295.5 922v4M391.5 922v4M487.5 922v4M583.5 922v4M679.5 922v4M775.5 922v4M871.5 922v4M967.5 922v4M1063.5 922v4M1159.5 922v4M1255.5 922v4M1351.5 922v4M1447.5 922v4" stroke="#000" stroke-width="1"/></svg>
<!-- header -->
<svg class="a" style="left:10px;top:106px" width="10" height="6"><path d="M0.5 0h9L5 5.5z" fill="#000"/></svg>
<span class="t" style="left:25px;top:103px;font-size:11px">GBPUSDd,Daily</span>
<span class="t hd" style="left:113px">1.30687</span><span class="t hd" style="left:163px">1.31084</span><span class="t hd" style="left:213px">1.30377</span><span class="t hd" style="left:263px">1.31007</span>
<!-- price labels -->
<span class="t px" style="top:114px">1.38280</span>
<span class="t px" style="top:163px">1.37200</span>
<span class="t px" style="top:212px">1.36120</span>
<span class="t px" style="top:261px">1.35040</span>
<span class="t px" style="top:310px">1.33960</span>
<span class="t px" style="top:359px">1.32880</span>
<span class="t px" style="top:408px">1.31800</span>
<span class="t px" style="top:457px">1.30720</span>
<span class="t px" style="top:506px">1.29620</span>
<span class="t px" style="top:555px">1.28540</span>
<span class="t px" style="top:604px">1.27460</span>
<span class="t px" style="top:653px">1.26380</span>
<span class="t px" style="top:702px">1.25300</span>
<span class="t px" style="top:751px">1.24220</span>
<span class="t px" style="top:800px">1.23140</span>
<span class="t px" style="top:849px">1.22060</span>
<span class="t px" style="top:898px">1.20960</span>
<div class="a" style="left:1858px;top:442px;width:56px;height:14px;background:#000"></div>
<span class="t px" style="top:444px;color:#fff">1.31007</span>
<!-- date labels -->
<span class="t dt" style="left:6px">21 Jun 2024</span>
<span class="t dt" style="left:102px">25 Jul 2024</span>
<span class="t dt" style="left:198px">28 Aug 2024</span>
<span class="t dt" style="left:294px">1 Oct 2024</span>
<span class="t dt" style="left:390px">4 Nov 2024</span>
<span class="t dt" style="left:486px">6 Dec 2024</span>
<span class="t dt" style="left:582px">13 Jan 2025</span>
<span class="t dt" style="left:678px">14 Feb 2025</span>
<span class="t dt" style="left:774px">20 Mar 2025</span>
<span class="t dt" style="left:870px">23 Apr 2025</span>
<span class="t dt" style="left:966px">27 May 2025</span>
<span class="t dt" style="left:1062px">30 Jun 2025</span>
<span class="t dt" style="left:1158px">1 Aug 2025</span>
<span class="t dt" style="left:1254px">4 Sep 2025</span>
<span class="t dt" style="left:1350px">8 Oct 2025</span>
<span class="t dt" style="left:1446px">11 Nov 2025</span>

<!-- tab bar -->
<div class="a" style="left:2px;top:946px;width:1918px;height:1px;background:#d8d8d8"></div>
<div class="a" style="left:2px;top:947px;width:1918px;height:2px;background:#000"></div>
<div class="a" style="left:2px;top:949px;width:1918px;height:24px;background:#f0f0f0"></div>
<div class="a" style="left:2px;top:973px;width:1918px;height:1px;background:#fff"></div>
<div class="a" style="left:2px;top:974px;width:1918px;height:4px;background:#ececec"></div>
<div class="a" style="left:2px;top:949px;width:2px;height:24px;background:#7a7a7a"></div>
<span class="t tab" style="left:23px">USDRUBd,Daily</span>
<div class="a" style="left:141px;top:952px;width:1px;height:18px;background:#555"></div>
<span class="t tab" style="left:154px">XAUUSDd,H1</span>
<div class="a" style="left:257px;top:952px;width:1px;height:18px;background:#555"></div>
<span class="t tab" style="left:270px">EURUSDd,Daily</span>
<div class="a" style="left:385px;top:952px;width:1px;height:18px;background:#555"></div>
<span class="t tab" style="left:399px">BTCUSD,H4</span>
<div class="a" style="left:489px;top:947px;width:130px;height:25px;background:#fff;border:2px solid #000;border-top:none;box-sizing:border-box"></div>
<span class="t tab" style="left:502px;color:#000">GBPUSDd,Daily</span>
<svg class="a" style="left:1878px;top:953px" width="10" height="12"><path d="M7 1L2 6l5 5z" fill="#9a9a9a"/></svg>
<svg class="a" style="left:1904px;top:953px" width="10" height="12"><path d="M3 1l5 5-5 5z" fill="#9a9a9a"/></svg>
<div class="a" style="left:1025px;top:977px;width:1px;height:1px;background:#7a7a7a"></div><div class="a" style="left:1175px;top:977px;width:1px;height:1px;background:#7a7a7a"></div><div class="a" style="left:1306px;top:977px;width:1px;height:1px;background:#7a7a7a"></div><div class="a" style="left:1395px;top:977px;width:1px;height:1px;background:#7a7a7a"></div><div class="a" style="left:1484px;top:977px;width:1px;height:1px;background:#7a7a7a"></div><div class="a" style="left:1569px;top:977px;width:1px;height:1px;background:#7a7a7a"></div><div class="a" style="left:1656px;top:977px;width:1px;height:1px;background:#7a7a7a"></div><div class="a" style="left:1740px;top:977px;width:1px;height:1px;background:#7a7a7a"></div>
</body></html>
